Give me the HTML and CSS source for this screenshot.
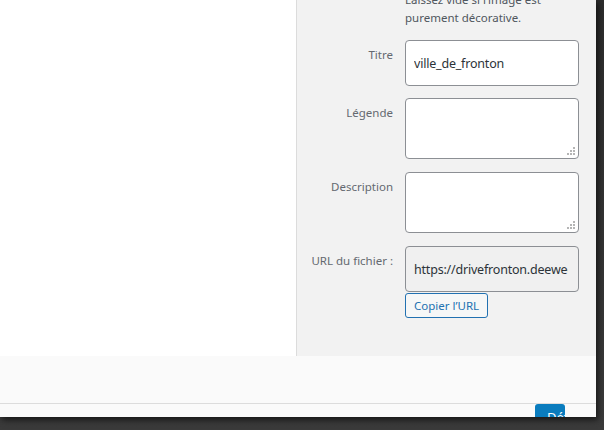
FILE: index.html
```html
<!DOCTYPE html>
<html lang="fr">
<head>
    <meta charset="UTF-8">
    <meta name="viewport" content="width=device-width, initial-scale=1.0">
    <title>Détails du fichier joint</title>
    <link rel="stylesheet" href="styles.css">
</head>
<body>

    <div class="modal">
        <div class="modal-body">
            <div class="preview"></div>

            <aside class="details">
                <div class="details-inner">
                    <p class="hint">Laissez vide si l’image est<br>purement décorative.</p>

                    <div class="setting">
                        <label for="title">Titre</label>
                        <input type="text" id="title" class="field" value="ville_de_fronton">
                    </div>

                    <div class="setting setting-area">
                        <label for="caption">Légende</label>
                        <span class="area-wrap">
                            <textarea id="caption" class="field area"></textarea>
                            <svg class="grip" width="9" height="9" viewBox="0 0 9 9">
                                <rect x="6" y="0" width="2" height="2"/>
                                <rect x="3" y="3" width="2" height="2"/>
                                <rect x="6" y="3" width="2" height="2"/>
                                <rect x="0" y="6" width="2" height="2"/>
                                <rect x="3" y="6" width="2" height="2"/>
                                <rect x="6" y="6" width="2" height="2"/>
                            </svg>
                        </span>
                    </div>

                    <div class="setting setting-area">
                        <label for="description">Description</label>
                        <span class="area-wrap">
                            <textarea id="description" class="field area"></textarea>
                            <svg class="grip" width="9" height="9" viewBox="0 0 9 9">
                                <rect x="6" y="0" width="2" height="2"/>
                                <rect x="3" y="3" width="2" height="2"/>
                                <rect x="6" y="3" width="2" height="2"/>
                                <rect x="0" y="6" width="2" height="2"/>
                                <rect x="3" y="6" width="2" height="2"/>
                                <rect x="6" y="6" width="2" height="2"/>
                            </svg>
                        </span>
                    </div>

                    <div class="setting setting-url">
                        <label for="url">URL du fichier :</label>
                        <div class="url-col">
                            <input type="text" id="url" class="field readonly" readonly value="https://drivefronton.deewee.fr/wp-content/uploads/ville_de_fronton.jpg">
                            <button type="button" class="button-copy">Copier l’URL</button>
                        </div>
                    </div>
                </div>
            </aside>
        </div>

        <div class="modal-gap"></div>

        <div class="toolbar">
            <button type="button" class="button-primary">Définir l’image</button>
        </div>
    </div>

</body>
</html>
```

FILE: styles.css
```css
body {
    margin: 0;
    width: 604px;
    height: 430px;
    overflow: hidden;
    font-family: 'Noto Sans', 'Open Sans', sans-serif;
    background: linear-gradient(to bottom, #2c2c2c, #3a3a3a);
}

.modal {
    width: 596px;
    height: 417px;
    display: flex;
    flex-direction: column;
    background-color: #fafafa;
    box-shadow: 2px 3px 6px rgba(0, 0, 0, 0.6);
}

.modal-body {
    display: flex;
    height: 356px;
}

.preview {
    flex: 1;
    background-color: #fff;
}

.details {
    width: 299px;
    border-left: 1px solid #dcdcdc;
    background-color: #f2f2f2;
    overflow: hidden;
}

.details-inner {
    margin-top: -9px;
    padding-right: 17px;
}

.hint {
    margin: 0 0 13px 108px;
    font-size: 11.5px;
    line-height: 18px;
    color: #50575e;
}

.setting {
    display: flex;
    gap: 12px;
    margin-bottom: 12px;
}

.setting-area {
    margin-bottom: 13px;
}

.setting label {
    width: 96px;
    flex-shrink: 0;
    padding-top: 7px;
    text-align: right;
    font-size: 11.5px;
    line-height: 16px;
    color: #646970;
}

.field {
    box-sizing: border-box;
    width: 174px;
    height: 46px;
    margin: 0;
    padding: 0 8px;
    border: 1px solid #8c8f94;
    border-radius: 4px;
    background-color: #fff;
    font-family: inherit;
    font-size: 12.5px;
    letter-spacing: -0.2px;
    color: #2c3338;
}

.area-wrap {
    position: relative;
    display: block;
    height: 61px;
}

.area {
    display: block;
    height: 61px;
    resize: none;
}

.grip {
    position: absolute;
    right: 3px;
    bottom: 3px;
    fill: #b5b5b5;
}

.url-col {
    display: flex;
    flex-direction: column;
    align-items: flex-start;
    gap: 1px;
}

.readonly {
    background-color: #f0f0f0;
    padding-right: 10px;
}

.button-copy {
    height: 25px;
    padding: 0 8px;
    border: 1px solid #2271b1;
    border-radius: 3px;
    background-color: #f6f7f7;
    color: #2271b1;
    font-family: inherit;
    font-size: 11.5px;
}

.modal-gap {
    height: 47px;
}

.toolbar {
    height: 13px;
    border-top: 1px solid #dcdcdc;
    display: flex;
    justify-content: flex-end;
    padding-right: 31px;
    overflow: hidden;
}

.button-primary {
    flex-shrink: 0;
    width: 30px;
    height: 30px;
    padding: 0 0 5px 12px;
    border: none;
    border-radius: 3px;
    background-color: #0a7cbe;
    color: #fff;
    font-family: inherit;
    font-size: 13px;
    text-align: left;
    white-space: nowrap;
    overflow: hidden;
}
```
